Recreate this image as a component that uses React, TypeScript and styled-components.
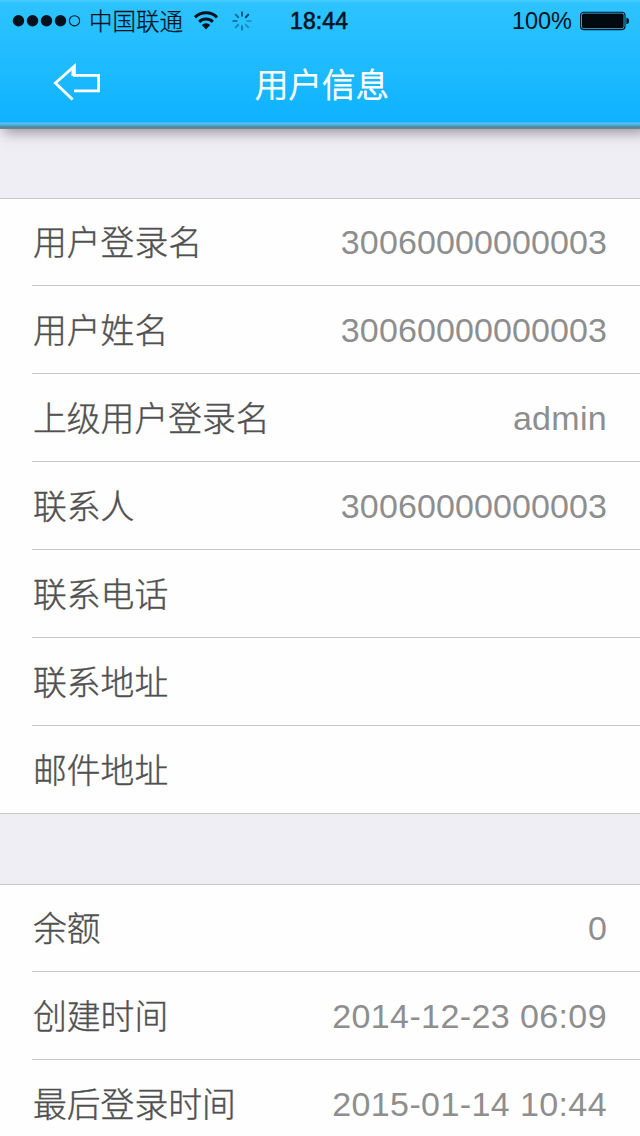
import React from "react";
import styled, { createGlobalStyle } from "styled-components";

const latin = `"Liberation Sans", "Noto Sans CJK SC", sans-serif`;

const GlobalStyle = createGlobalStyle`
  body {
    margin: 0;
    background: #eeeef4;
    font-family: ${latin};
    overflow: hidden;
  }
`;

const Screen = styled.main`
  width: 640px;
  height: 1136px;
  overflow: hidden;
  display: flex;
  flex-direction: column;
  background: #efeef4;
`;

const Header = styled.header`
  flex: none;
  height: 129px;
  display: flex;
  flex-direction: column;
  background: linear-gradient(
    to bottom,
    #4dcdff 0px,
    #2cc3ff 3px,
    #27c0ff 30px,
    #0fb2ff 122px,
    #3fb8f4 122px,
    #5dbdea 124px,
    #3c9fd0 126px,
    #5a8298 127px,
    #76838c 129px
  );
  box-shadow: 5px 3px 12px 1px rgba(70, 65, 70, 0.5);
`;

const StatusBar = styled.div`
  height: 40px;
  display: grid;
  grid-template-columns: 290px 1fr auto;
  align-items: center;
  color: #03121c;
`;

const StatusGroup = styled.div`
  display: flex;
  align-items: center;
  padding-left: 12px;
`;

const SignalIcon = styled.svg`
  width: 70px;
  height: 14px;
`;

const Carrier = styled.span`
  margin-left: 7px;
  width: 104px;
  font: 300 23.5px/38px "Noto Sans CJK SC", sans-serif;
  padding-bottom: 2px;
  -webkit-text-stroke: 0.25px currentColor;
  white-space: nowrap;
`;

const WifiIcon = styled.svg`
  width: 26px;
  height: 20px;
  margin-bottom: 2px;
`;

const SpinnerIcon = styled.svg`
  width: 20px;
  height: 20px;
  margin: 0 0 1px 13px;
`;

const Clock = styled.span`
  font-size: 23px;
  line-height: 42px;
  letter-spacing: 0.1px;
  -webkit-text-stroke: 0.6px currentColor;
`;

const Power = styled.div`
  display: flex;
  align-items: center;
  gap: 8px;
  padding-right: 10px;
  font-size: 23.5px;
  line-height: 42px;
`;

const BatteryIcon = styled.svg`
  width: 50px;
  height: 20px;
`;

const TitleBar = styled.div`
  height: 88px;
  display: grid;
  grid-template-columns: 152px 1fr 148px;
  align-items: center;
`;

const BackButton = styled.button`
  border: 0;
  padding: 0 0 2px 52px;
  background: none;
  display: flex;
`;

const Title = styled.h1`
  margin: 0;
  text-align: center;
  color: #fff;
  font: 300 33.5px/86px "Noto Sans CJK SC", sans-serif;
  padding-bottom: 2px;
  -webkit-text-stroke: 0.9px currentColor;
`;

const Section = styled.section`
  flex: none;
  margin-top: 69px;
  border-top: 1px solid #c8c7cc;
  background: #fefefe;

  & + & {
    margin-top: 70px;
  }
`;

const Row = styled.div`
  height: 88px;
  display: flex;
  padding-left: 32px;

  &:first-child {
    height: 87px;
  }

  &:last-child {
    padding-left: 0;
  }

  &:last-child > div {
    padding-left: 32px;
  }
`;

const RowBody = styled.div`
  flex: 1;
  display: flex;
  align-items: center;
  justify-content: space-between;
  padding-right: 33px;
  border-bottom: 1px solid #c8c7cc;
`;

const Label = styled.span`
  padding: 0 0 2px 1px;
  font: 300 33.8px/80px "Noto Sans CJK SC", sans-serif;
  -webkit-text-stroke: 0.4px currentColor;
  color: #505050;
`;

const Value = styled.span<{ $spacing?: number }>`
  font-size: 34px;
  line-height: 86px;
  letter-spacing: ${(p) => p.$spacing ?? 0}px;
  color: #8e8e8e;
  white-space: pre;
`;

interface Field {
  label: string;
  value?: string;
  spacing?: number;
}

const account: Field[] = [
  { label: "用户登录名", value: "30060000000003", spacing: 0.1 },
  { label: "用户姓名", value: "30060000000003", spacing: 0.1 },
  { label: "上级用户登录名", value: "admin", spacing: 0.3 },
  { label: "联系人", value: "30060000000003", spacing: 0.1 },
  { label: "联系电话" },
  { label: "联系地址" },
  { label: "邮件地址" },
];

const activity: Field[] = [
  { label: "余额", value: "0" },
  { label: "创建时间", value: "2014-12-23 06:09", spacing: 0.4 },
  { label: "最后登录时间", value: "2015-01-14 10:44", spacing: 0.4 },
];

const FieldList = ({ fields }: { fields: Field[] }) => (
  <Section>
    {fields.map((f) => (
      <Row key={f.label}>
        <RowBody>
          <Label>{f.label}</Label>
          {f.value && <Value $spacing={f.spacing}>{f.value}</Value>}
        </RowBody>
      </Row>
    ))}
  </Section>
);

const spokes = [0.8, 0.95, 0.3, 0.35, 0.5, 0.45, 0.55, 0.6];

export default function App() {
  return (
    <Screen>
      <GlobalStyle />
      <Header>
        <StatusBar>
          <StatusGroup>
            <SignalIcon viewBox="0 0 70 14">
              {[6.5, 20.5, 34.5, 48.5].map((x) => (
                <circle key={x} cx={x} cy="6.8" r="5.7" fill="#03121c" />
              ))}
              <circle cx="62.5" cy="6.8" r="5.1" fill="none" stroke="#03121c" strokeWidth="1.1" />
            </SignalIcon>
            <Carrier>中国联通</Carrier>
            <WifiIcon viewBox="0 0 26 20" fill="none" stroke="#03121c" strokeWidth="3">
              <path d="M2 7.4a15.6 15.6 0 0 1 22 0" />
              <path d="M6.2 11.9a9.6 9.6 0 0 1 13.6 0" />
              <path d="M13 19.4l-4.2-4.4a6 6 0 0 1 8.4 0z" fill="#03121c" stroke="none" />
            </WifiIcon>
            <SpinnerIcon viewBox="-10 -10 20 20">
              {spokes.map((o, i) => (
                <line
                  key={i}
                  x1="0"
                  y1="-4.6"
                  x2="0"
                  y2="-9.6"
                  stroke="#04304a"
                  strokeWidth="1.8"
                  strokeOpacity={o}
                  transform={`rotate(${i * 45})`}
                />
              ))}
            </SpinnerIcon>
          </StatusGroup>
          <Clock>18:44</Clock>
          <Power>
            100%
            <BatteryIcon viewBox="0 0 50 20">
              <rect x="0.6" y="1.2" width="44.4" height="17.4" rx="3" fill="none" stroke="#03121c" strokeWidth="1.1" />
              <rect x="2" y="2.6" width="41.6" height="14.6" rx="1.6" fill="#020a10" />
              <path d="M46.4 6.8c1.8.2 2.6 1.5 2.6 3.2s-.8 3-2.6 3.2z" fill="#03121c" />
            </BatteryIcon>
          </Power>
        </StatusBar>
        <TitleBar>
          <BackButton aria-label="返回">
            <svg width="50" height="40" viewBox="0 0 50 40" fill="none" stroke="#fff" strokeWidth="2.8">
              <path d="M20.6 36.6L3.4 20 22.4 3.2V12.4H46.6V27.8H22" />
              <path d="M21.2 6V13" strokeWidth="3.4" />
            </svg>
          </BackButton>
          <Title>用户信息</Title>
        </TitleBar>
      </Header>
      <FieldList fields={account} />
      <FieldList fields={activity} />
    </Screen>
  );
}
